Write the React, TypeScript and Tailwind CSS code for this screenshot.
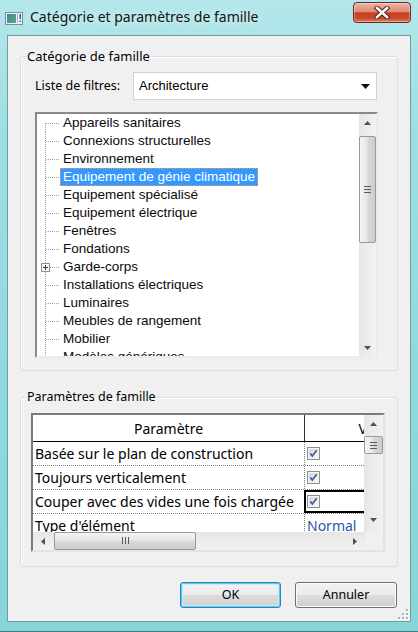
import React from "react";

const seg = "font-['Noto_Sans',sans-serif]";
const ari = "font-['Liberation_Sans',Arial,sans-serif]";

function Tri({ dir }: { dir: "up" | "down" | "left" | "right" }) {
  const vert = dir === "up" || dir === "down";
  const w = vert ? 7 : 4;
  const h = vert ? 4 : 7;
  const pts =
    dir === "up"
      ? "0,4 7,4 3.5,0"
      : dir === "down"
      ? "0,0 7,0 3.5,4"
      : dir === "left"
      ? "4,0 4,7 0,3.5"
      : "0,0 0,7 4,3.5";
  return (
    <svg width={w} height={h} viewBox={`0 0 ${w} ${h}`}>
      <polygon points={pts} fill="#505050" />
    </svg>
  );
}

function Conn({ first, plus }: { first?: boolean; plus?: boolean }) {
  return (
    <svg width="23" height="18" className="shrink-0">
      <line x1="8.5" y1={first ? 9 : 0} x2="8.5" y2="18" stroke="#a0a0a0" strokeDasharray="1 1" />
      <line x1={plus ? 13 : 9} y1="9.5" x2="23" y2="9.5" stroke="#a0a0a0" strokeDasharray="1 1" />
      {plus && (
        <g>
          <rect x="4.5" y="5.5" width="8" height="8" fill="#f7f7f7" stroke="#919191" />
          <line x1="6" y1="9.5" x2="11" y2="9.5" stroke="#2b3f63" />
          <line x1="8.5" y1="7" x2="8.5" y2="12" stroke="#2b3f63" />
        </g>
      )}
    </svg>
  );
}

function CheckBox() {
  return (
    <svg width="13" height="13" viewBox="0 0 13 13">
      <defs>
        <linearGradient id="cbg" x1="0" y1="0" x2="1" y2="1">
          <stop offset="0" stopColor="#d4d4d4" />
          <stop offset="1" stopColor="#f9f9f9" />
        </linearGradient>
      </defs>
      <rect x="0.5" y="0.5" width="12" height="12" fill="#f6f6f6" stroke="#8e8f8f" />
      <rect x="2" y="2" width="9" height="9" fill="url(#cbg)" />
      <path d="M3.3 6.6 L5.3 9 L9.8 3.2" stroke="#3554a6" strokeWidth="1.6" fill="none" />
    </svg>
  );
}

function VGrip() {
  return (
    <svg width="8" height="7" viewBox="0 0 8 7">
      <line x1="0" y1="0.5" x2="7" y2="0.5" stroke="#5a5a5a" />
      <line x1="0" y1="3.5" x2="7" y2="3.5" stroke="#5a5a5a" />
      <line x1="0" y1="6.5" x2="7" y2="6.5" stroke="#5a5a5a" />
    </svg>
  );
}

function HGrip() {
  return (
    <svg width="7" height="8" viewBox="0 0 7 8">
      <line x1="0.5" y1="0" x2="0.5" y2="7" stroke="#5a5a5a" />
      <line x1="3.5" y1="0" x2="3.5" y2="7" stroke="#5a5a5a" />
      <line x1="6.5" y1="0" x2="6.5" y2="7" stroke="#5a5a5a" />
    </svg>
  );
}

const treeItems = [
  "Appareils sanitaires",
  "Connexions structurelles",
  "Environnement",
  "Equipement de génie climatique",
  "Equipement spécialisé",
  "Equipement électrique",
  "Fenêtres",
  "Fondations",
  "Garde-corps",
  "Installations électriques",
  "Luminaires",
  "Meubles de rangement",
  "Mobilier",
  "Modèles génériques",
];

const vThumb =
  "bg-[linear-gradient(to_right,#f4f4f4,#e6e6e6_45%,#d8d8d8_55%,#cdcdcd)] border border-[#9a9a9a] rounded-[2px]";
const hThumb =
  "bg-[linear-gradient(to_bottom,#f4f4f4,#e6e6e6_45%,#d8d8d8_55%,#cdcdcd)] border border-[#9a9a9a] rounded-[2px]";

export default function App() {
  return (
    <div className="w-[418px] h-[632px] flex flex-col bg-[linear-gradient(to_bottom,#b3e7ea,#9fdfe3_20%,#8fd9dd_60%,#86d5d9)] border-b border-[#4d7c80] overflow-hidden">
      {/* Title bar */}
      <div className="h-[35px] flex items-start shrink-0">
        <div className="ml-[5px] mt-[12px]">
          <svg width="18" height="13" viewBox="0 0 18 13">
            <defs>
              <linearGradient id="ico" x1="0" y1="0" x2="1" y2="1">
                <stop offset="0" stopColor="#3f7fb8" />
                <stop offset="1" stopColor="#58b06a" />
              </linearGradient>
            </defs>
            <rect x="0.5" y="0.5" width="17" height="12" fill="#eef2f6" stroke="#7d8c9c" />
            <rect x="2" y="2" width="9" height="9" fill="url(#ico)" />
            <rect x="12" y="2" width="1" height="9" fill="#9fb1c4" />
            <rect x="14.5" y="2" width="1.5" height="5" fill="#2f5fa0" />
            <rect x="14.5" y="8.5" width="1.5" height="1.5" fill="#2f5fa0" />
          </svg>
        </div>
        <div className={`${seg} ml-[7px] mt-[7px] text-[14px] leading-[20px] text-[#111] [text-shadow:0_0_8px_rgba(255,255,255,0.9)]`}>
          Catégorie et paramètres de famille
        </div>
        <div className="ml-auto mr-[7px] mt-[2px] w-[58px] h-[21px] rounded-[4px] border border-[#6b2a1f] bg-[linear-gradient(to_bottom,#ecb4a6_0%,#de8a74_45%,#c7401f_52%,#c84a2b_80%,#e2805f_100%)] shadow-[inset_0_0_0_1px_rgba(255,255,255,0.35)] flex items-center justify-center">
          <svg width="16" height="13" viewBox="0 0 16 13">
            <path d="M3 2 L13 11 M13 2 L3 11" stroke="#5a2418" strokeWidth="4.6" strokeLinecap="square" />
            <path d="M3 2 L13 11 M13 2 L3 11" stroke="#ffffff" strokeWidth="2.6" strokeLinecap="square" />
          </svg>
        </div>
      </div>

      {/* Client area */}
      <div className="relative mx-[7px] h-[587px] shrink-0 bg-[#f0f0f0] border border-[#6f9ea2] flex flex-col">
        {/* Group 1 */}
        <fieldset className="ml-[12px] mt-[12px] w-[378px] border border-[#d5dfe5] rounded-[3px] shadow-[inset_1px_1px_0_#fff]">
          <legend className={`${seg} ml-[5px] px-[1px] text-[13px] leading-[16px] text-black`}>
            Catégorie de famille
          </legend>
          <div className="pl-[14px] pb-[12px] pt-[8px] flex flex-col">
            <div className="flex items-center h-[28px]">
              <div className={`${seg} w-[98px] text-[12.5px] text-black`}>Liste de filtres:</div>
              <div className="w-[244px] h-[28px] bg-white border border-[#d2d2d2] flex items-center">
                <span className={`${ari} ml-[5px] text-[13px] text-black`}>Architecture</span>
                <span className="ml-auto mr-[6px] flex">
                  <svg width="9" height="5" viewBox="0 0 9 5">
                    <polygon points="0,0 9,0 4.5,5" fill="#111" />
                  </svg>
                </span>
              </div>
            </div>
            <div className="mt-[12px] w-[343px] h-[246px] bg-white border-2 border-t-[#8a8a8a] border-l-[#8a8a8a] border-r-[#ececec] border-b-[#ececec] flex">
              <div className="flex-1 overflow-hidden flex flex-col">
                {treeItems.map((t, i) => (
                  <div key={t} className="h-[18px] shrink-0 flex items-center">
                    <Conn first={i === 0} plus={t === "Garde-corps"} />
                    {i === 3 ? (
                      <span className={`${ari} h-[18px] px-[2px] flex items-center text-[13.5px] text-white bg-[#3399ff] border border-dotted border-[#e8a050] whitespace-nowrap`}>
                        {t}
                      </span>
                    ) : (
                      <span className={`${ari} pl-[3px] text-[13.5px] text-[#0a0a0a] leading-[18px] whitespace-nowrap`}>{t}</span>
                    )}
                  </div>
                ))}
              </div>
              <div className="w-[17px] bg-[linear-gradient(to_right,#e6e6e6,#f2f2f2)] flex flex-col items-center">
                <div className="h-[17px] w-full flex items-center justify-center">
                  <Tri dir="up" />
                </div>
                <div className={`mt-[5px] h-[107px] w-[17px] ${vThumb} flex items-center justify-center`}>
                  <VGrip />
                </div>
                <div className="mt-auto h-[17px] w-full flex items-center justify-center">
                  <Tri dir="down" />
                </div>
              </div>
            </div>
          </div>
        </fieldset>

        {/* Group 2 */}
        <fieldset className="ml-[12px] mt-[18px] w-[378px] border border-[#d5dfe5] rounded-[3px] shadow-[inset_1px_1px_0_#fff]">
          <legend className={`${seg} ml-[5px] px-[1px] text-[12.5px] leading-[16px] text-black`}>
            Paramètres de famille
          </legend>
          <div className="pl-[10px] pt-[8px] pb-[14px]">
            <div className="w-[354px] h-[139px] bg-white border-2 border-t-[#7a7a7a] border-l-[#7a7a7a] border-r-[#e3e3e3] border-b-[#e3e3e3] flex flex-col">
              <div className="flex h-[117px]">
                <div className={`${seg} w-[332px] overflow-hidden flex flex-col text-[14px] text-black`}>
                  <div className="h-[27px] shrink-0 flex border-b border-black">
                    <div className="w-[271px] shrink-0 flex items-center justify-center">Paramètre</div>
                    <div className="w-[150px] shrink-0 border-l border-[#333] flex items-center justify-center">Valeur</div>
                  </div>
                  {[
                    ["Basée sur le plan de construction", "cb"],
                    ["Toujours verticalement", "cb"],
                    ["Couper avec des vides une fois chargée", "cbf"],
                    ["Type d'élément", "Normal"],
                  ].map(([label, v]) => (
                    <div key={label} className="h-[24px] shrink-0 flex border-b border-dotted border-[#7d7d7d]">
                      <div className="w-[271px] shrink-0 pl-[2px] flex items-center whitespace-nowrap">{label}</div>
                      <div
                        className={`w-[150px] shrink-0 flex items-center ${
                          v === "cbf" ? "border-2 border-black pl-[1px]" : "border-l border-dotted border-[#7d7d7d] pl-[2px]"
                        }`}
                      >
                        {v === "Normal" ? <span className="text-[#2a55a8]">Normal</span> : <CheckBox />}
                      </div>
                    </div>
                  ))}
                </div>
                <div className="w-[19px] bg-[linear-gradient(to_right,#e6e6e6,#f2f2f2)] flex flex-col items-center">
                  <div className="h-[17px] w-full flex items-center justify-center">
                    <Tri dir="up" />
                  </div>
                  <div className={`mt-[4px] h-[18px] w-[19px] ${vThumb} flex items-center justify-center`}>
                    <VGrip />
                  </div>
                  <div className="mt-auto mb-[4px] h-[17px] w-full flex items-center justify-center">
                    <Tri dir="down" />
                  </div>
                </div>
              </div>
              <div className="flex flex-1">
                <div className="w-[332px] bg-[linear-gradient(to_bottom,#e6e6e6,#f2f2f2)] flex items-center">
                  <div className="w-[19px] h-full flex items-center justify-center">
                    <Tri dir="left" />
                  </div>
                  <div className={`ml-[2px] w-[142px] h-[18px] ${hThumb} flex items-center justify-center`}>
                    <HGrip />
                  </div>
                  <div className="ml-auto mr-[1px] w-[19px] h-full flex items-center justify-center">
                    <Tri dir="right" />
                  </div>
                </div>
                <div className="flex-1 bg-[#f0f0f0]" />
              </div>
            </div>
          </div>
        </fieldset>

        {/* Buttons */}
        <div className="mt-[15px] flex justify-end gap-[14px] mr-[13px]">
          <div className={`${seg} w-[101px] h-[26px] rounded-[3px] border border-[#3c7fb1] shadow-[inset_0_0_0_1px_#48d0f8,inset_0_0_0_2px_#c8ecfa] bg-[linear-gradient(to_bottom,#f2f2f2,#ebebeb_50%,#dddddd_50%,#cfcfcf)] flex items-center justify-center text-[12.5px] text-black`}>
            OK
          </div>
          <div className={`${seg} w-[102px] h-[26px] rounded-[3px] border border-[#707070] shadow-[inset_0_0_0_1px_#fcfcfc] bg-[linear-gradient(to_bottom,#f2f2f2,#ebebeb_50%,#dddddd_50%,#cfcfcf)] flex items-center justify-center text-[12.5px] text-black`}>
            Annuler
          </div>
        </div>

        {/* resize grip */}
        <div className="absolute right-[1px] bottom-[1px]">
          <svg width="11" height="11" viewBox="0 0 11 11">
            {[
              [8, 0],
              [8, 4],
              [4, 4],
              [8, 8],
              [4, 8],
              [0, 8],
            ].map(([x, y]) => (
              <g key={`${x}-${y}`}>
                <rect x={x + 1} y={y + 1} width="2" height="2" fill="#ffffff" />
                <rect x={x} y={y} width="2" height="2" fill="#a8b3bd" />
              </g>
            ))}
          </svg>
        </div>
      </div>
    </div>
  );
}
